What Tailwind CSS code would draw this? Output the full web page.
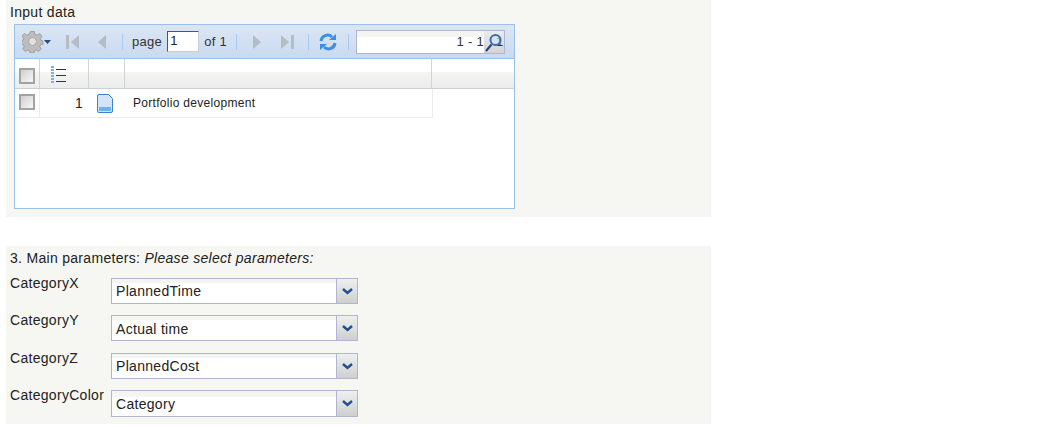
<!DOCTYPE html>
<html lang="en">
<head>
    <meta charset="UTF-8">
    <title>Input data</title>
    <script src="https://cdn.jsdelivr.net/npm/@tailwindcss/browser@4"></script>
</head>
<body class="bg-white font-['Liberation_Sans',sans-serif] text-[14px] tracking-[0.3px] text-[#222] overflow-hidden">
    <div class="ml-[6px] w-[705px]">
        <!-- Input data -->
        <section class="h-[217px] bg-[#f6f7f2] pl-[8px] pt-[4px]">
            <div class="ml-[-4px] h-[20px] leading-[16px]">Input data</div>
            <div class="w-[501px] h-[185px] border border-[#9cc0ec] bg-white">
                <!-- toolbar -->
                <div class="h-[34px] flex items-center border-b border-[#9cc0ec] bg-gradient-to-b from-[#dbe6f4] to-[#c9daf0] text-[13px] text-[#333]">
                    <svg class="ml-[7px] w-[22px] h-[22px]" viewBox="0 0 22 22">
                        <path d="M9 1h4l.5 3 2.500 1 2.500-1.800 2.500 2.800-1.800 2.500.8 2 2 .5v3.500l-2.500.5-.8 2 1.500 2.500-2.800 2.500-2.400-1.500-2 .8-.5 2.500h-4l-.5-2.500-2-.8-2.400 1.500-2.800-2.500 1.500-2.500-.8-2-2.500-.5v-3.500l2-.5.8-2-1.800-2.500 2.500-2.800 2.500 1.800 2.500-1z" transform="translate(0 -.5) scale(.95)" fill="#bdbdbd" stroke="#9c9c9c"/>
                        <circle cx="10.500" cy="10.500" r="4" fill="#e2e2e2" stroke="#a5a5a5"/>
                    </svg>
                    <svg class="w-[7px] h-[4px]" viewBox="0 0 7 4"><path d="M0 0h7L3.500 4z" fill="#1f4f8f"/></svg>
                    <svg class="ml-[15px] w-[14px] h-[16px]" viewBox="0 0 14 16"><rect x="0" y="1" width="3" height="14" fill="#b5bcc4"/><path d="M13 1v14L5 8z" fill="#b5bcc4"/></svg>
                    <svg class="ml-[17px] w-[10px] h-[16px]" viewBox="0 0 10 16"><path d="M9 1v14L1 8z" fill="#b5bcc4"/></svg>
                    <div class="ml-[15px] w-[1px] h-[16px] bg-[#a9c9f0]"></div>
                    <span class="ml-[9px]">page</span>
                    <div class="ml-[5px] w-[32px] h-[21px] border border-t-[#555] border-l-[#555] border-r-[#ccc] border-b-[#ccc] bg-white pl-[2px] leading-[18px] text-[#222]">1</div>
                    <span class="ml-[5px]">of 1</span>
                    <div class="ml-[9px] w-[1px] h-[16px] bg-[#a9c9f0]"></div>
                    <svg class="ml-[15px] w-[10px] h-[16px]" viewBox="0 0 10 16"><path d="M1 1v14l8-7z" fill="#b5bcc4"/></svg>
                    <svg class="ml-[18px] w-[14px] h-[16px]" viewBox="0 0 14 16"><path d="M1 1v14l8-7z" fill="#b5bcc4"/><rect x="11" y="1" width="3" height="14" fill="#b5bcc4"/></svg>
                    <div class="ml-[14px] w-[1px] h-[16px] bg-[#a9c9f0]"></div>
                    <svg class="ml-[10px] w-[18px] h-[18px]" viewBox="0 0 18 18" fill="none" stroke="#3c8fe6" stroke-width="3">
                        <path d="M2 8a6.500 6.500 0 0 1 11-4"/><path d="M16 10a6.500 6.500 0 0 1-11 4"/>
                        <path d="M10 7h7V1z" fill="#3c8fe6" stroke="none"/><path d="M8 11H1v6z" fill="#3c8fe6" stroke="none"/>
                    </svg>
                    <div class="ml-[11px] w-[1px] h-[16px] bg-[#a9c9f0]"></div>
                    <div class="ml-[7px] w-[149px] h-[24px] flex border border-[#b0b5d0] bg-gradient-to-b from-[#f4f5f0] from-[25%] to-white to-[25%]">
                        <div class="flex-1 text-right leading-[22px] text-[#333]">1 - 1</div>
                        <div class="relative w-[20px] bg-gradient-to-b from-[#e9ebec] to-[#d4d4d4] overflow-hidden">
                            <span class="absolute left-[12px] top-[2px] leading-[18px] text-[#333]">1</span>
                            <svg class="absolute left-[1px] top-[2px] w-[17px] h-[19px]" viewBox="0 0 17 19" fill="none">
                                <circle cx="10.500" cy="7" r="5" stroke="#3b6cb0" stroke-width="2" fill="#cfe3f7" fill-opacity="0.500"/>
                                <path d="M6.500 11.500L1 18" stroke="#24477f" stroke-width="2.200"/>
                            </svg>
                        </div>
                    </div>
                </div>
                <!-- header row -->
                <div class="h-[30px] flex border-b border-[#cfcfcf] bg-gradient-to-b from-white from-[45%] via-[#f5f6f0] via-[45%] to-[#ebecee]">
                    <div class="w-[25px] border-r border-[#d4d4d4] pl-[4px] pt-[9px]">
                        <div class="w-[16px] h-[16px] border-2 border-[#a3a3a3] bg-gradient-to-br from-[#cfcfcf] to-[#f8f8f8]"></div>
                    </div>
                    <div class="w-[49px] border-r border-[#d4d4d4] pl-[10px] pt-[7px]">
                        <svg class="w-[16px] h-[18px]" viewBox="0 0 16 18">
                            <path d="M1 1h3M1 4h3M1 7h3M1 10h3M1 13h3M1 16h3" stroke="#7fb0e6" stroke-width="2"/>
                            <path d="M6 3.500h10M6 9.500h10M6 15.500h10" stroke="#333" stroke-width="1"/>
                        </svg>
                    </div>
                    <div class="w-[36px] border-r border-[#d4d4d4]"></div>
                    <div class="w-[307px] border-r border-[#d4d4d4]"></div>
                </div>
                <!-- body row -->
                <div class="w-[418px] h-[29px] flex items-center border-b border-r border-[#ececec] text-[12px] tracking-[0.3px]">
                    <div class="w-[25px] h-full border-r border-[#ececec] pl-[4px] pt-[5px]">
                        <div class="w-[16px] h-[16px] border-2 border-[#a3a3a3] bg-gradient-to-br from-[#cfcfcf] to-[#f8f8f8]"></div>
                    </div>
                    <div class="w-[43px] text-right text-[14px]">1</div>
                    <svg class="ml-[13px] w-[18px] h-[21px]" viewBox="0 0 18 21">
                        <path d="M3 1.500h9.500l4 4V18a1.500 1.500 0 0 1-1.500 1.500H3A1.500 1.500 0 0 1 1.500 18V3A1.500 1.500 0 0 1 3 1.500z" fill="#d2e4f8" stroke="#3f7fcb"/>
                        <rect x="3" y="14" width="12" height="4" fill="#6db3ee"/>
                    </svg>
                    <span class="ml-[19px]">Portfolio development</span>
                </div>
            </div>
        </section>

        <!-- Main parameters -->
        <section class="mt-[29px] h-[178px] bg-[#f6f7f2] pl-[4px] pt-[3px]">
            <div class="h-[29px] leading-[18px]">3. Main parameters: <em>Please select parameters:</em></div>
            <div class="flex h-[37px]">
                <div class="w-[101px] mt-[-3px] leading-[16px]">CategoryX</div>
                <div class="w-[247px] h-[26px] flex border border-[#b0b5d0] bg-gradient-to-b from-[#f4f5f0] from-[15%] to-white to-[15%]">
                    <div class="flex-1 pl-[4px] leading-[24px]">PlannedTime</div>
                    <div class="w-[21px] flex items-center justify-center border-l border-[#b0b5d0] bg-gradient-to-b from-[#eef0f0] to-[#cfcfcf]">
                        <svg class="w-[11px] h-[7px]" viewBox="0 0 11 7"><path d="M1 1l4.500 4 4.500-4" fill="none" stroke="#1f4f8f" stroke-width="2.400"/></svg>
                    </div>
                </div>
            </div>
            <div class="flex h-[38px]">
                <div class="w-[101px] mt-[-3px] leading-[16px]">CategoryY</div>
                <div class="w-[247px] h-[26px] flex border border-[#b0b5d0] bg-gradient-to-b from-[#f4f5f0] from-[15%] to-white to-[15%]">
                    <div class="flex-1 pl-[4px] leading-[26px]">Actual time</div>
                    <div class="w-[21px] flex items-center justify-center border-l border-[#b0b5d0] bg-gradient-to-b from-[#eef0f0] to-[#cfcfcf]">
                        <svg class="w-[11px] h-[7px]" viewBox="0 0 11 7"><path d="M1 1l4.500 4 4.500-4" fill="none" stroke="#1f4f8f" stroke-width="2.400"/></svg>
                    </div>
                </div>
            </div>
            <div class="flex h-[37px]">
                <div class="w-[101px] mt-[-3px] leading-[16px]">CategoryZ</div>
                <div class="w-[247px] h-[26px] flex border border-[#b0b5d0] bg-gradient-to-b from-[#f4f5f0] from-[15%] to-white to-[15%]">
                    <div class="flex-1 pl-[4px] leading-[24px]">PlannedCost</div>
                    <div class="w-[21px] flex items-center justify-center border-l border-[#b0b5d0] bg-gradient-to-b from-[#eef0f0] to-[#cfcfcf]">
                        <svg class="w-[11px] h-[7px]" viewBox="0 0 11 7"><path d="M1 1l4.500 4 4.500-4" fill="none" stroke="#1f4f8f" stroke-width="2.400"/></svg>
                    </div>
                </div>
            </div>
            <div class="flex">
                <div class="w-[101px] mt-[-3px] leading-[16px]">CategoryColor</div>
                <div class="w-[247px] h-[27px] flex border border-[#b0b5d0] bg-gradient-to-b from-[#f4f5f0] from-[25%] to-white to-[25%]">
                    <div class="flex-1 pl-[4px] leading-[26px]">Category</div>
                    <div class="w-[21px] flex items-center justify-center border-l border-[#b0b5d0] bg-gradient-to-b from-[#eef0f0] to-[#cfcfcf]">
                        <svg class="w-[11px] h-[7px]" viewBox="0 0 11 7"><path d="M1 1l4.500 4 4.500-4" fill="none" stroke="#1f4f8f" stroke-width="2.400"/></svg>
                    </div>
                </div>
            </div>
        </section>
    </div>
</body>
</html>
